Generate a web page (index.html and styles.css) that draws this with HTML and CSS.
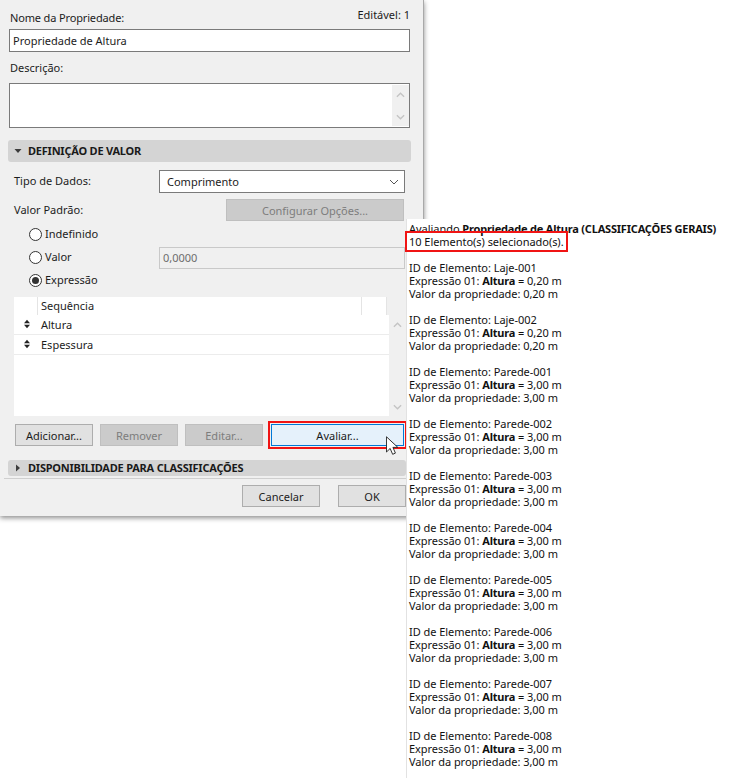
FILE: index.html
```html
<!DOCTYPE html>
<html lang="pt">
<head>
<meta charset="utf-8">
<title>Propriedade de Altura</title>
<link rel="stylesheet" href="styles.css">
</head>
<body>
<div class="stage">
  <section class="dialog">
    <div class="name-head">
      <label class="name-label">Nome da Propriedade:</label>
      <span class="editable">Editável: 1</span>
    </div>
    <div class="field name-field">Propriedade de Altura</div>
    <label class="desc-label">Descrição:</label>
    <div class="field desc-field">
      <div class="mini-scroll tall">
        <svg class="chev" viewBox="0 0 10 6"><path d="M1 5 5 1l4 4"/></svg>
        <svg class="chev" viewBox="0 0 10 6"><path d="M1 1l4 4 4-4"/></svg>
      </div>
    </div>
    <div class="section-bar open-bar">
      <svg class="tri" viewBox="0 0 8 8"><path d="M.5 2h7L4 6z"/></svg>
      <span>DEFINIÇÃO DE VALOR</span>
    </div>
    <div class="row type-row">
      <label>Tipo de Dados:</label>
      <div class="select">Comprimento
        <svg class="select-chev" viewBox="0 0 10 6"><path d="M1 1l4 4 4-4"/></svg>
      </div>
    </div>
    <div class="row default-row">
      <label>Valor Padrão:</label>
      <div class="btn disabled config">Configurar Opções...</div>
    </div>
    <div class="radios">
      <div class="radio-row"><span class="radio"></span><span class="radio-text">Indefinido</span></div>
      <div class="radio-row value-row">
        <span class="radio-cell"><span class="radio"></span><span class="radio-text">Valor</span></span>
        <div class="value-input">0,0000</div>
      </div>
      <div class="radio-row"><span class="radio on"></span><span class="radio-text">Expressão</span></div>
    </div>
    <div class="list-wrap">
      <div class="list">
        <div class="list-head"><span class="c1"></span><span class="c2">Sequência</span><span class="c3"></span></div>
        <div class="list-row"><span class="sort"><svg viewBox="0 0 7 10"><path d="M3.5 0 7 4H0zM0 6h7l-3.500 4z"/></svg></span>Altura</div>
        <div class="list-row"><span class="sort"><svg viewBox="0 0 7 10"><path d="M3.5 0 7 4H0zM0 6h7l-3.500 4z"/></svg></span>Espessura</div>
        <div class="list-fill"></div>
      </div>
      <div class="list-scroll">
        <svg class="chev" viewBox="0 0 10 6"><path d="M1 5 5 1l4 4"/></svg>
        <svg class="chev" viewBox="0 0 10 6"><path d="M1 1l4 4 4-4"/></svg>
      </div>
    </div>
    <div class="actions">
      <div class="btn">Adicionar...</div>
      <div class="btn disabled">Remover</div>
      <div class="btn disabled">Editar...</div>
      <div class="btn primary">Avaliar...</div>
    </div>
    <div class="section-bar closed-bar">
      <svg class="tri" viewBox="0 0 8 8"><path d="M2 .5v7L6 4z"/></svg>
      <span>DISPONIBILIDADE PARA CLASSIFICAÇÕES</span>
    </div>
    <div class="footer">
      <div class="btn">Cancelar</div>
      <div class="btn ok">OK</div>
    </div>
  </section>

  <aside class="results">
    <p class="block">Avaliando <b>Propriedade de Altura (CLASSIFICAÇÕES GERAIS)</b><br><span class="mark">10 Elemento(s) selecionado(s).</span></p>
    <p class="block">ID de Elemento: Laje-001<br>Expressão 01: <b>Altura</b> = 0,20 m<br>Valor da propriedade: 0,20 m</p>
    <p class="block">ID de Elemento: Laje-002<br>Expressão 01: <b>Altura</b> = 0,20 m<br>Valor da propriedade: 0,20 m</p>
    <p class="block">ID de Elemento: Parede-001<br>Expressão 01: <b>Altura</b> = 3,00 m<br>Valor da propriedade: 3,00 m</p>
    <p class="block">ID de Elemento: Parede-002<br>Expressão 01: <b>Altura</b> = 3,00 m<br>Valor da propriedade: 3,00 m</p>
    <p class="block">ID de Elemento: Parede-003<br>Expressão 01: <b>Altura</b> = 3,00 m<br>Valor da propriedade: 3,00 m</p>
    <p class="block">ID de Elemento: Parede-004<br>Expressão 01: <b>Altura</b> = 3,00 m<br>Valor da propriedade: 3,00 m</p>
    <p class="block">ID de Elemento: Parede-005<br>Expressão 01: <b>Altura</b> = 3,00 m<br>Valor da propriedade: 3,00 m</p>
    <p class="block">ID de Elemento: Parede-006<br>Expressão 01: <b>Altura</b> = 3,00 m<br>Valor da propriedade: 3,00 m</p>
    <p class="block">ID de Elemento: Parede-007<br>Expressão 01: <b>Altura</b> = 3,00 m<br>Valor da propriedade: 3,00 m</p>
    <p class="block">ID de Elemento: Parede-008<br>Expressão 01: <b>Altura</b> = 3,00 m<br>Valor da propriedade: 3,00 m</p>
  </aside>

  <svg class="cursor" viewBox="0 0 13 21"><path d="M.5.500v16.500l4-3.800 2.700 6.300 3-1.300-2.700-6.200h5.300z"/></svg>
</div>
</body>
</html>
```

FILE: styles.css
```css
* { box-sizing: border-box; }
html, body { margin: 0; height: 100%; background: #fff; }
body {
  font-family: "Noto Sans", "Open Sans", sans-serif;
  font-size: 11px;
  line-height: 13px;
  color: #1c1c1c;
  overflow: hidden;
}
.stage { position: relative; width: 731px; height: 778px; overflow: hidden; }

.dialog {
  width: 424px;
  height: 516px;
  background: #f0f0f0;
  border-right: 1px solid #a9a9a9;
  box-shadow: 0 2px 5px rgba(0,0,0,.45);
  padding-top: 10px;
  display: flex;
  flex-direction: column;
}
.name-head { display: flex; justify-content: space-between; padding: 0 13px 0 10px; height: 19px; }
.name-label { padding-top: 1px; letter-spacing: -.15px; }
.editable { margin-top: -2px; }
.field { margin-left: 9px; width: 401px; background: #fff; border: 1px solid #7a7a7a; }
.name-field { height: 23px; padding: 4px 3px; }
.desc-label { margin: 9px 0 0 10px; height: 22px; }
.desc-field { height: 45px; display: flex; justify-content: flex-end; }
.mini-scroll { width: 17px; background: #f0f0f0; margin: 1px 0; display: flex; flex-direction: column; justify-content: space-between; align-items: center; padding: 7px 0 6px; }
.chev { width: 9px; height: 6px; fill: none; stroke: #c4c4c4; stroke-width: 1.500; display: block; }
.section-bar { display: flex; align-items: center; background: #d4d4d4; border-radius: 3px; font-weight: 700; color: #1a1a1a; letter-spacing: -.22px; }
.section-bar span { margin-left: 6px; position: relative; top: -1px; }
.tri { width: 8px; height: 8px; fill: #3c3c3c; margin-left: 6px; flex: none; }
.open-bar { margin: 12px 0 0 8px; width: 403px; height: 22px; }
.closed-bar { margin: 14px 0 0 8px; width: 398px; height: 16px; }
.row { display: flex; align-items: center; justify-content: space-between; padding-left: 14px; }
.type-row { margin-top: 8px; width: 405px; height: 23px; }
.type-row label { position: relative; top: -1px; }
.select { position: relative; width: 246px; height: 23px; background: #fff; border: 1px solid #7a7a7a; padding: 4px 7px; }
.select-chev { position: absolute; right: 5px; top: 8px; width: 10px; height: 6px; fill: none; stroke: #555; stroke-width: 1; }
.default-row { margin-top: 6px; width: 404px; height: 22px; }
.default-row label { position: relative; top: -1px; }
.btn { display: flex; align-items: center; justify-content: center; flex: none; width: 78px; height: 22px; background: #e1e1e1; border: 1px solid #adadad; }
.btn.disabled { background: #cbcbcb; border-color: #bfbfbf; color: #7d7d7d; }
.btn.ok { width: 68px; }
.config { width: 178px; }
.radios { margin-top: 2px; padding-left: 29px; }
.radio-row { display: flex; align-items: center; height: 23px; }
.radio-text { position: relative; top: -1px; }
.radio { display: block; position: relative; width: 13px; height: 13px; margin-right: 3px; background: #fff; border: 1px solid #333; border-radius: 50%; flex: none; }
.radio.on::after { content: ""; position: absolute; left: 2px; top: 2px; width: 7px; height: 7px; border-radius: 50%; background: #333; }
.value-row { width: 376px; justify-content: space-between; }
.radio-cell { display: flex; align-items: center; }
.value-input { width: 246px; height: 22px; background: #f0f0f0; border: 1px solid #c9c9c9; color: #6d6d6d; padding: 3px 3px; }
.list-wrap { display: flex; margin: 5px 0 0 14px; width: 391px; height: 119px; }
.list { width: 375px; display: flex; flex-direction: column; }
.list-head { display: flex; width: 373px; height: 18px; background: #fff; }
.list-head span { height: 18px; padding-top: 2px; }
.c1 { width: 24px; border-right: 1px solid #e4e4e4; }
.c2 { width: 324px; padding-left: 3px; border-right: 1px solid #e4e4e4; }
.c3 { width: 25px; border-right: 1px solid #e4e4e4; }
.list-row { display: flex; align-items: center; height: 20px; padding-bottom: 1px; background: #fff; border-bottom: 1px solid #ececec; }
.list-fill { flex: 1; background: #fff; }
.sort { width: 27px; padding-left: 10px; display: flex; }
.sort svg { width: 6px; height: 10px; fill: #222; }
.list-scroll { width: 16px; background: #f0f0f0; display: flex; flex-direction: column; justify-content: space-between; align-items: center; padding: 25px 0 6px; }
.actions { display: flex; gap: 7px; margin: 8px 0 0 15px; }
.btn.primary { width: 133px; margin-left: 1px; background: #e5f1fb; border: 1px solid #0078d7; outline: 2px solid #f01414; outline-offset: 1px; color: #1a1a1a; }
.footer { border-top: 1px solid #cfcfcf; margin: 2px 0 0 4px; padding: 6px 0 0 238px; display: flex; gap: 18px; }
.results {
  position: absolute;
  left: 406px;
  top: 219px;
  width: 325px;
  height: 559px;
  background: #fff;
  border-left: 1px solid #e2e2e2;
  padding: 3px 0 0 2px;
  color: #111;
}
.results b { letter-spacing: -.2px; }
.block { margin: 0 0 13px; letter-spacing: -.04px; }
.mark { display: inline-block; outline: 2px solid #f01414; outline-offset: 2px; }
.cursor { position: absolute; left: 386px; top: 436px; width: 12px; height: 20px; fill: #fff; stroke: #222; stroke-width: 1; }
```
